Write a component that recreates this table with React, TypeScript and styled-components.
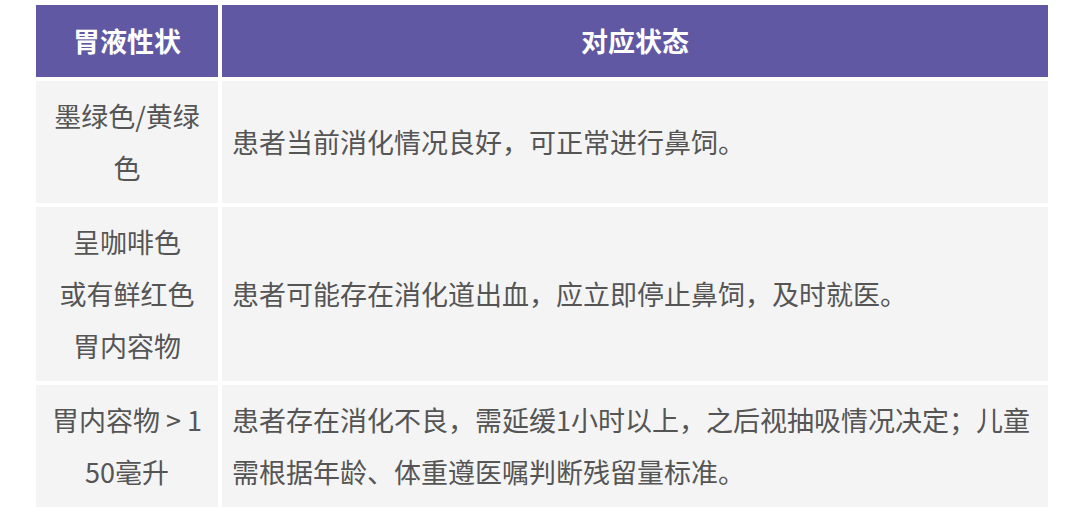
import styled, { createGlobalStyle } from "styled-components";

const GlobalStyle = createGlobalStyle`
  body {
    margin: 0;
    background: #ffffff;
    font-family: "Noto Sans CJK SC", "Noto Sans", sans-serif;
  }
`;

const Table = styled.table`
  margin: 1px 0 0 32px;
  width: 1020px;
  table-layout: fixed;
  border-collapse: separate;
  border-spacing: 4px;
  font-size: 27px;
`;

const HeadCell = styled.th`
  background: #6058a3;
  color: #ffffff;
  font-weight: 700;
  line-height: 52px;
  padding: 10px;
  text-align: center;
`;

const Cell = styled.td<{ $center?: boolean }>`
  background: #f4f4f4;
  color: #555555;
  line-height: 52px;
  padding: 9px 10px;
  text-align: ${(p) => (p.$center ? "center" : "left")};
  vertical-align: middle;
  word-break: break-all;
`;

const rows: { kind: string[]; state: string }[] = [
  { kind: ["墨绿色/黄绿色"], state: "患者当前消化情况良好，可正常进行鼻饲。" },
  {
    kind: ["呈咖啡色", "或有鲜红色", "胃内容物"],
    state: "患者可能存在消化道出血，应立即停止鼻饲，及时就医。",
  },
  {
    kind: ["胃内容物 > 150毫升"],
    state: "患者存在消化不良，需延缓1小时以上，之后视抽吸情况决定；儿童需根据年龄、体重遵医嘱判断残留量标准。",
  },
];

export default function App() {
  return (
    <>
      <GlobalStyle />
      <Table>
        <colgroup>
          <col style={{ width: 182 }} />
          <col />
        </colgroup>
        <thead>
          <tr>
            <HeadCell>胃液性状</HeadCell>
            <HeadCell>对应状态</HeadCell>
          </tr>
        </thead>
        <tbody>
          {rows.map((row, i) => (
            <tr key={i}>
              <Cell $center>
                {row.kind.map((line, j) => (
                  <span key={j}>
                    {j > 0 && <br />}
                    {line}
                  </span>
                ))}
              </Cell>
              <Cell>{row.state}</Cell>
            </tr>
          ))}
        </tbody>
      </Table>
    </>
  );
}
